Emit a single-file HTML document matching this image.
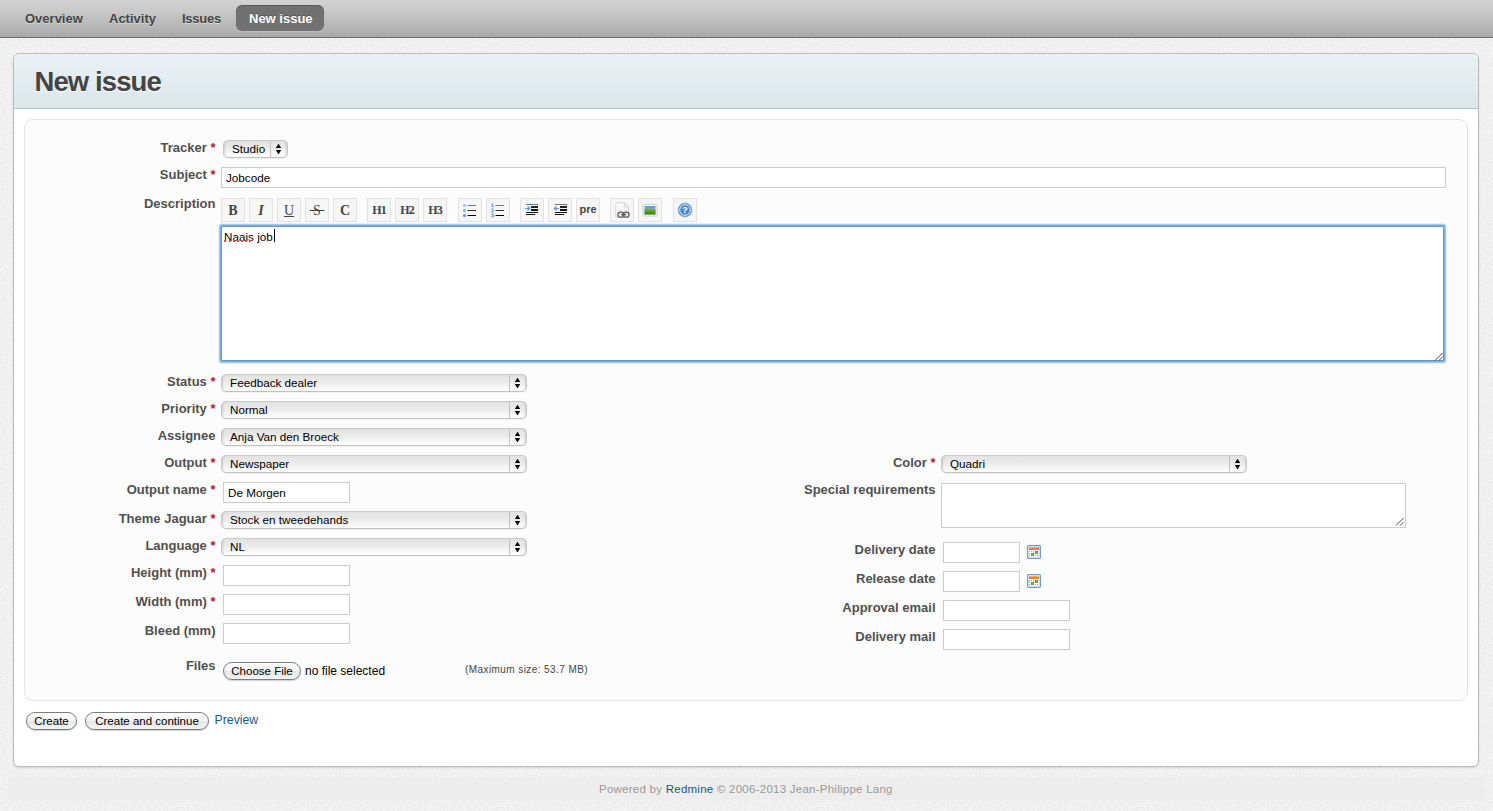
<!DOCTYPE html>
<html>
<head>
<meta charset="utf-8">
<title>New issue</title>
<style>
*{box-sizing:border-box;margin:0;padding:0}
html,body{width:1493px;height:811px;overflow:hidden}
body{background:#ededed;font-family:"Liberation Sans",sans-serif;font-size:12px;color:#444;position:relative}
.abs{position:absolute}
#nav{position:absolute;left:0;top:0;width:1493px;height:38px;background:linear-gradient(#d2d2d2,#c9c9c9 30%,#a9a9a9);border-bottom:1px solid #6e6e6e}
#nav a{position:absolute;top:11px;font-weight:bold;font-size:13px;color:#444;text-shadow:0 1px 0 rgba(255,255,255,.45);white-space:nowrap;line-height:15px}
#nav .pill{position:absolute;left:236px;top:5px;width:88px;height:26px;border-radius:6px;background:#717171;box-shadow:inset 0 1px 1px rgba(0,0,0,.22),0 1px 0 rgba(255,255,255,.18)}
#nav a.w{color:#fff;text-shadow:0 -1px 0 rgba(0,0,0,.3)}
#main{position:absolute;left:13px;top:53px;width:1466px;height:714px;background:#fff;border:1px solid #bdbdbd;border-radius:6px;box-shadow:0 1px 2px rgba(0,0,0,.12)}
#head{position:absolute;left:0;top:0;width:1464px;height:55px;background:linear-gradient(#eaf1f4,#dbe6ea);border-bottom:1px solid #a9c9d6;border-radius:5px 5px 0 0}
#head h2{position:absolute;left:20.5px;top:12px;font-size:27.5px;line-height:32px;font-weight:bold;color:#444;white-space:nowrap;text-shadow:0 1px 0 #fff;letter-spacing:-.9px}
#box{position:absolute;left:24px;top:119px;width:1444px;height:582px;background:#fcfcfc;border:1px solid #e4e4e4;border-radius:9px}
.lbl{position:absolute;font-weight:bold;font-size:13px;line-height:16px;color:#505050;text-align:right;white-space:nowrap}
.lbl i{font-style:normal;color:#b8163a}
.inp{position:absolute;background:#fff;border:1px solid #ccc;font-size:11.7px;color:#000;line-height:14px;padding:3px 0 0 4px;white-space:nowrap}
.sel{position:absolute;height:18px;border-radius:5px;border:1px solid #c6c6c6;border-top-color:#c9c9c9;border-bottom-color:#c0c0c0;background:linear-gradient(#e2e2e2,#ebebeb 45%,#f6f6f6 75%,#fdfdfd);font-size:11.7px;color:#000;line-height:15px;padding:0 0 0 8px;white-space:nowrap;box-shadow:inset 3px 0 2px -2px rgba(0,0,0,.13),inset -3px 0 2px -2px rgba(0,0,0,.13),0 1px 0 rgba(0,0,0,.04)}
.sel b{position:absolute;right:0;top:0;width:17px;height:16px;border-left:1px solid #c2c2c2}
.sel b:before,.sel b:after{content:"";position:absolute;left:4.8px;width:5.4px;height:4.3px;background:#000}
.sel b:before{top:2.8px;clip-path:polygon(50% 0,100% 100%,0 100%)}
.sel b:after{top:9.1px;clip-path:polygon(0 0,100% 0,50% 100%)}
.tb{position:absolute;top:198px;width:24px;height:24px;background:#f6f6f6;border:1px solid #e2e2e2;color:#444;text-align:center}
.tS{position:absolute;left:0;top:4px;width:22px;text-align:center;font-family:"Liberation Serif",serif;line-height:16px;color:#444;white-space:nowrap}
.btn{position:absolute;height:18px;border:1px solid #7d7d7d;border-radius:9px;background:linear-gradient(#fff,#f3f3f3 50%,#e6e6e6 52%,#f4f4f4);font-size:11.5px;color:#000;line-height:15px;padding-top:1px;text-align:center;white-space:nowrap;box-shadow:0 1px 1px rgba(0,0,0,.18)}
</style>
</head>
<body>
<svg class="abs" style="left:0;top:0" width="1493" height="811"><filter id="nz" x="0" y="0" width="100%" height="100%"><feTurbulence type="fractalNoise" baseFrequency="0.8" numOctaves="2" seed="7" result="t"/><feColorMatrix type="matrix" values="0 0 0 0 0.97  0 0 0 0 0.97  0 0 0 0 0.97  1.5 1.5 0 0 -1.2"/></filter><rect width="1493" height="811" fill="#ebebeb"/><rect width="1493" height="811" filter="url(#nz)" opacity="1"/></svg>
<div class="abs" style="left:8px;top:777px;width:1476px;height:23px;background:#ededed"></div>
<div id="nav">
  <a style="left:25px">Overview</a>
  <a style="left:109px">Activity</a>
  <a style="left:182px;letter-spacing:-.25px">Issues</a>
  <div class="pill"></div>
  <a class="w" style="left:249px">New issue</a>
</div>
<div id="main">
  <div id="head"><h2>New issue</h2></div>
</div>
<div id="box"></div>

<!-- left labels -->
<div class="lbl" style="right:1277.5px;top:140px">Tracker <i>*</i></div>
<div class="lbl" style="right:1277.5px;top:167px">Subject <i>*</i></div>
<div class="lbl" style="right:1277.5px;top:196px">Description</div>
<div class="lbl" style="right:1277.5px;top:374px">Status <i>*</i></div>
<div class="lbl" style="right:1277.5px;top:401px">Priority <i>*</i></div>
<div class="lbl" style="right:1277.5px;top:428px">Assignee</div>
<div class="lbl" style="right:1277.5px;top:455px">Output <i>*</i></div>
<div class="lbl" style="right:1277.5px;top:482px">Output name <i>*</i></div>
<div class="lbl" style="right:1277.5px;top:511px">Theme Jaguar <i>*</i></div>
<div class="lbl" style="right:1277.5px;top:538px">Language <i>*</i></div>
<div class="lbl" style="right:1277.5px;top:565px">Height (mm) <i>*</i></div>
<div class="lbl" style="right:1277.5px;top:594px">Width (mm) <i>*</i></div>
<div class="lbl" style="right:1277.5px;top:623px">Bleed (mm)</div>
<div class="lbl" style="right:1277.5px;top:658px">Files</div>

<!-- right labels -->
<div class="lbl" style="right:557.5px;top:455px">Color <i>*</i></div>
<div class="lbl" style="right:557.5px;top:482px">Special requirements</div>
<div class="lbl" style="right:557.5px;top:542px">Delivery date</div>
<div class="lbl" style="right:557.5px;top:571px">Release date</div>
<div class="lbl" style="right:557.5px;top:600px">Approval email</div>
<div class="lbl" style="right:557.5px;top:629px">Delivery mail</div>

<!-- controls -->
<div class="sel" style="left:223px;top:140px;width:65px">Studio<b></b></div>
<div class="inp" style="left:221px;top:167px;width:1225px;height:21px">Jobcode</div>

<div id="toolbar">
<div class="tb" style="left:221px"><span class="tS" style="font-weight:bold;font-size:14px">B</span></div>
<div class="tb" style="left:249px"><span class="tS" style="font-weight:bold;font-style:italic;font-size:14px">I</span></div>
<div class="tb" style="left:277px"><span class="tS" style="font-size:14px;text-decoration:underline">U</span></div>
<div class="tb" style="left:305px"><span class="tS" style="font-size:14px;text-decoration:line-through">&nbsp;S&nbsp;</span></div>
<div class="tb" style="left:333px"><span class="tS" style="font-weight:bold;font-size:14px">C</span></div>
<div class="tb" style="left:367px"><span class="tS" style="font-weight:bold;font-size:12px;letter-spacing:-1px;top:3px">H1</span></div>
<div class="tb" style="left:395px"><span class="tS" style="font-weight:bold;font-size:12px;letter-spacing:-1px;top:3px">H2</span></div>
<div class="tb" style="left:423px"><span class="tS" style="font-weight:bold;font-size:12px;letter-spacing:-1px;top:3px">H3</span></div>
<div class="tb" style="left:458px"><svg width="22" height="22" viewBox="0 0 22 22" style="position:absolute;left:0;top:0"><rect x="4" y="5" width="3" height="3" rx="1" fill="#a9c4ef"/><rect x="8.5" y="6" width="8.5" height="1" fill="#777"/><rect x="4" y="10" width="3" height="3" rx="1" fill="#8fb2ea"/><rect x="8.5" y="11" width="8.5" height="1" fill="#333"/><rect x="4" y="15" width="3" height="3" rx="1" fill="#6f9be3"/><rect x="8.5" y="16" width="8.5" height="1" fill="#000"/></svg></div>
<div class="tb" style="left:486px"><svg width="22" height="22" viewBox="0 0 22 22" style="position:absolute;left:0;top:0"><rect x="8.5" y="6" width="8.5" height="1" fill="#777"/><rect x="8.5" y="11" width="8.5" height="1" fill="#333"/><rect x="8.5" y="16" width="8.5" height="1" fill="#000"/><path d="M4.3 5.6 L5.6 4.6 V7.6 M4.2 7.7 H7" stroke="#7aa3e6" stroke-width="1" fill="none"/><path d="M4.1 10 H6.4 V11 L4.2 12.8 H7" stroke="#7aa3e6" stroke-width="1" fill="none"/><path d="M4.1 15 H6.6 L5.2 16.3 H6.6 V17.8 H4.1" stroke="#6a98e2" stroke-width="1" fill="none"/></svg></div>
<div class="tb" style="left:520px"><svg width="22" height="22" viewBox="0 0 22 22" style="position:absolute;left:0;top:0"><rect x="5" y="5" width="12" height="1" fill="#777"/><rect x="10" y="7" width="7" height="2" fill="#222"/><rect x="10" y="10" width="7" height="2" fill="#111"/><rect x="5" y="13" width="12" height="1" fill="#111"/><rect x="5" y="15" width="9" height="1" fill="#111"/><path d="M4 9.5 H8.5 M6.5 7.5 L8.7 9.5 L6.5 11.5" stroke="#5b93e6" stroke-width="1.2" fill="none"/></svg></div>
<div class="tb" style="left:548px"><svg width="22" height="22" viewBox="0 0 22 22" style="position:absolute;left:1px;top:0"><rect x="5" y="5" width="12" height="1" fill="#777"/><rect x="10" y="7" width="7" height="2" fill="#222"/><rect x="10" y="10" width="7" height="2" fill="#111"/><rect x="5" y="13" width="12" height="1" fill="#111"/><rect x="5" y="15" width="9" height="1" fill="#111"/><path d="M4.5 9.5 H9 M6.5 7.5 L4.3 9.5 L6.5 11.5" stroke="#5b93e6" stroke-width="1.2" fill="none"/></svg></div>
<div class="tb" style="left:576px"><span class="tS" style="font-family:'Liberation Sans',sans-serif;font-weight:bold;font-size:11px;top:2px">pre</span></div>
<div class="tb" style="left:610px"><svg width="22" height="22" viewBox="0 0 22 22" style="position:absolute;left:0;top:0"><defs><linearGradient id="pg" x1="0" y1="0" x2="1" y2="1"><stop offset="0" stop-color="#ffffff"/><stop offset="1" stop-color="#e9e9e9"/></linearGradient></defs><path d="M4.8 3.8 H13.5 L17.5 7.8 V18.2 H4.8 Z" fill="url(#pg)" stroke="#d6d6d6" stroke-width="1"/><path d="M13.5 3.8 V7.8 H17.5" fill="#ececec" stroke="#cfcfcf" stroke-width=".8"/><rect x="7" y="13.3" width="5.6" height="4.8" rx="2.2" fill="none" stroke="#666" stroke-width="1.4"/><rect x="12.4" y="13.3" width="5.6" height="4.8" rx="2.2" fill="none" stroke="#666" stroke-width="1.4"/><rect x="10.3" y="15" width="4.6" height="1.4" fill="#555"/></svg></div>
<div class="tb" style="left:638px"><svg width="22" height="22" viewBox="0 0 22 22" style="position:absolute;left:0;top:0"><defs><linearGradient id="sk" x1="0" y1="0" x2="0" y2="1"><stop offset="0" stop-color="#4f97e6"/><stop offset="1" stop-color="#a5cdf2"/></linearGradient><linearGradient id="hl" x1="0" y1="0" x2="0" y2="1"><stop offset="0" stop-color="#86b830"/><stop offset="1" stop-color="#2f7d0c"/></linearGradient></defs><rect x="3.9" y="5.4" width="14.2" height="11.6" rx="1.2" fill="#fafafa" stroke="#cdcdcd" stroke-width="1"/><rect x="5.5" y="7" width="11" height="8.5" fill="url(#sk)"/><path d="M5.5 15.5 V10.6 Q8 8.8 11 9.8 Q13.5 8.8 16.5 10.8 V15.5 Z" fill="url(#hl)"/></svg></div>
<div class="tb" style="left:673px"><svg width="22" height="22" viewBox="0 0 22 22" style="position:absolute;left:0;top:0"><circle cx="11" cy="11" r="6.9" fill="#5b8fd0" stroke="#7fa9de" stroke-width=".8"/><circle cx="11" cy="11" r="5.3" fill="#4d83c6" stroke="#e8f0fa" stroke-width="1"/><text x="11" y="14.3" text-anchor="middle" font-family="Liberation Sans" font-weight="bold" font-size="9.5" fill="#fff">?</text></svg></div>
</div><!--tbend-->

<div class="abs" id="ta" style="left:221px;top:226px;width:1223px;height:135px;background:#fff;border:1px solid #6a97c2;border-radius:1px;box-shadow:0 0 0 1px #7eb0e4,0 0 1.5px 2px rgba(125,176,228,.85);font-size:11.7px;color:#000;line-height:14px;padding:3px 0 0 2px">Naais job</div>

<div class="sel" style="left:221px;top:374px;width:306px">Feedback dealer<b></b></div>
<div class="sel" style="left:221px;top:401px;width:306px">Normal<b></b></div>
<div class="sel" style="left:221px;top:428px;width:306px">Anja Van den Broeck<b></b></div>
<div class="sel" style="left:221px;top:455px;width:306px">Newspaper<b></b></div>
<div class="inp" style="left:223px;top:482px;width:127px;height:21px">De Morgen</div>
<div class="sel" style="left:221px;top:511px;width:306px">Stock en tweedehands<b></b></div>
<div class="sel" style="left:221px;top:538px;width:306px">NL<b></b></div>
<div class="inp" style="left:223px;top:565px;width:127px;height:21px"></div>
<div class="inp" style="left:223px;top:594px;width:127px;height:21px"></div>
<div class="inp" style="left:223px;top:623px;width:127px;height:21px"></div>

<div class="btn" style="left:223px;top:662px;width:78px">Choose File</div>
<div class="abs" style="left:305px;top:664px;font-size:12px;color:#000;line-height:14px;white-space:nowrap">no file selected</div>
<div class="abs" style="left:465px;top:663.7px;font-size:10px;letter-spacing:.42px;color:#444;line-height:12px;white-space:nowrap">(Maximum size: 53.7 MB)</div>

<div class="sel" style="left:941px;top:455px;width:306px">Quadri<b></b></div>
<div class="inp" style="left:941px;top:483px;width:465px;height:45px"></div>
<div class="inp" style="left:943px;top:542px;width:77px;height:21px"></div>
<div class="inp" style="left:943px;top:571px;width:77px;height:21px"></div>
<div class="inp" style="left:943px;top:600px;width:127px;height:21px"></div>
<div class="inp" style="left:943px;top:629px;width:127px;height:21px"></div>


<svg class="abs" style="left:1027px;top:545px" width="14" height="14" viewBox="0 0 14 14"><rect x=".5" y=".5" width="13" height="13" rx=".6" fill="#fff" stroke="#6c98d6"/><rect x="1.3" y="1.3" width="11.4" height="11.4" fill="none" stroke="#b5cbed" stroke-width=".7"/><rect x="2" y="2" width="10" height="3" fill="#f2782a"/><rect x="2" y="2" width="10" height="1.2" fill="#f8a766"/><path d="M2 6.5H12M2 8.5H12M2 10.5H12" stroke="#8fb0e4" stroke-width="1" stroke-dasharray="1 1"/><rect x="4" y="8" width="3" height="3" fill="#5aa048"/><rect x="8" y="6" width="3" height="3" fill="#5aa048"/><rect x="5" y="9" width="1" height="1" fill="#8cc47a"/><rect x="9" y="7" width="1" height="1" fill="#8cc47a"/><path d="M9.3 12.5 L12.5 9.3 V12.5Z" fill="#dbe4f2"/></svg>
<svg class="abs" style="left:1027px;top:574px" width="14" height="14" viewBox="0 0 14 14"><rect x=".5" y=".5" width="13" height="13" rx=".6" fill="#fff" stroke="#6c98d6"/><rect x="1.3" y="1.3" width="11.4" height="11.4" fill="none" stroke="#b5cbed" stroke-width=".7"/><rect x="2" y="2" width="10" height="3" fill="#f2782a"/><rect x="2" y="2" width="10" height="1.2" fill="#f8a766"/><path d="M2 6.5H12M2 8.5H12M2 10.5H12" stroke="#8fb0e4" stroke-width="1" stroke-dasharray="1 1"/><rect x="4" y="8" width="3" height="3" fill="#5aa048"/><rect x="8" y="6" width="3" height="3" fill="#5aa048"/><rect x="5" y="9" width="1" height="1" fill="#8cc47a"/><rect x="9" y="7" width="1" height="1" fill="#8cc47a"/><path d="M9.3 12.5 L12.5 9.3 V12.5Z" fill="#dbe4f2"/></svg>
<svg class="abs" style="left:1433.5px;top:351.5px" width="9" height="9" viewBox="0 0 9 9"><path d="M1 8.5 L8.5 1 M5 8.5 L8.5 5" stroke="#444" stroke-width="1" fill="none"/></svg>
<svg class="abs" style="left:1395px;top:517px" width="9" height="9" viewBox="0 0 9 9"><path d="M1 8.5 L8.5 1 M5 8.5 L8.5 5" stroke="#444" stroke-width="1" fill="none"/></svg>
<div class="abs" style="left:274px;top:229px;width:1px;height:13px;background:#000"></div>
<div class="abs" style="left:224.3px;top:240px;width:26.4px;height:0;border-top:2px dotted #f8453c"></div>
<div class="btn" style="left:26px;top:712px;width:51px">Create</div>
<div class="btn" style="left:85px;top:712px;width:124px">Create and continue</div>
<div class="abs" style="left:214.5px;top:713px;font-size:12.3px;color:#16598c;line-height:15px;white-space:nowrap">Preview</div>

<div class="abs" style="left:599px;top:782px;font-size:11.5px;letter-spacing:.25px;color:#999;line-height:14px;white-space:nowrap">Powered by <span style="color:#16598c">Redmine</span> © 2006-2013 Jean-Philippe Lang</div>
</body>
</html>
